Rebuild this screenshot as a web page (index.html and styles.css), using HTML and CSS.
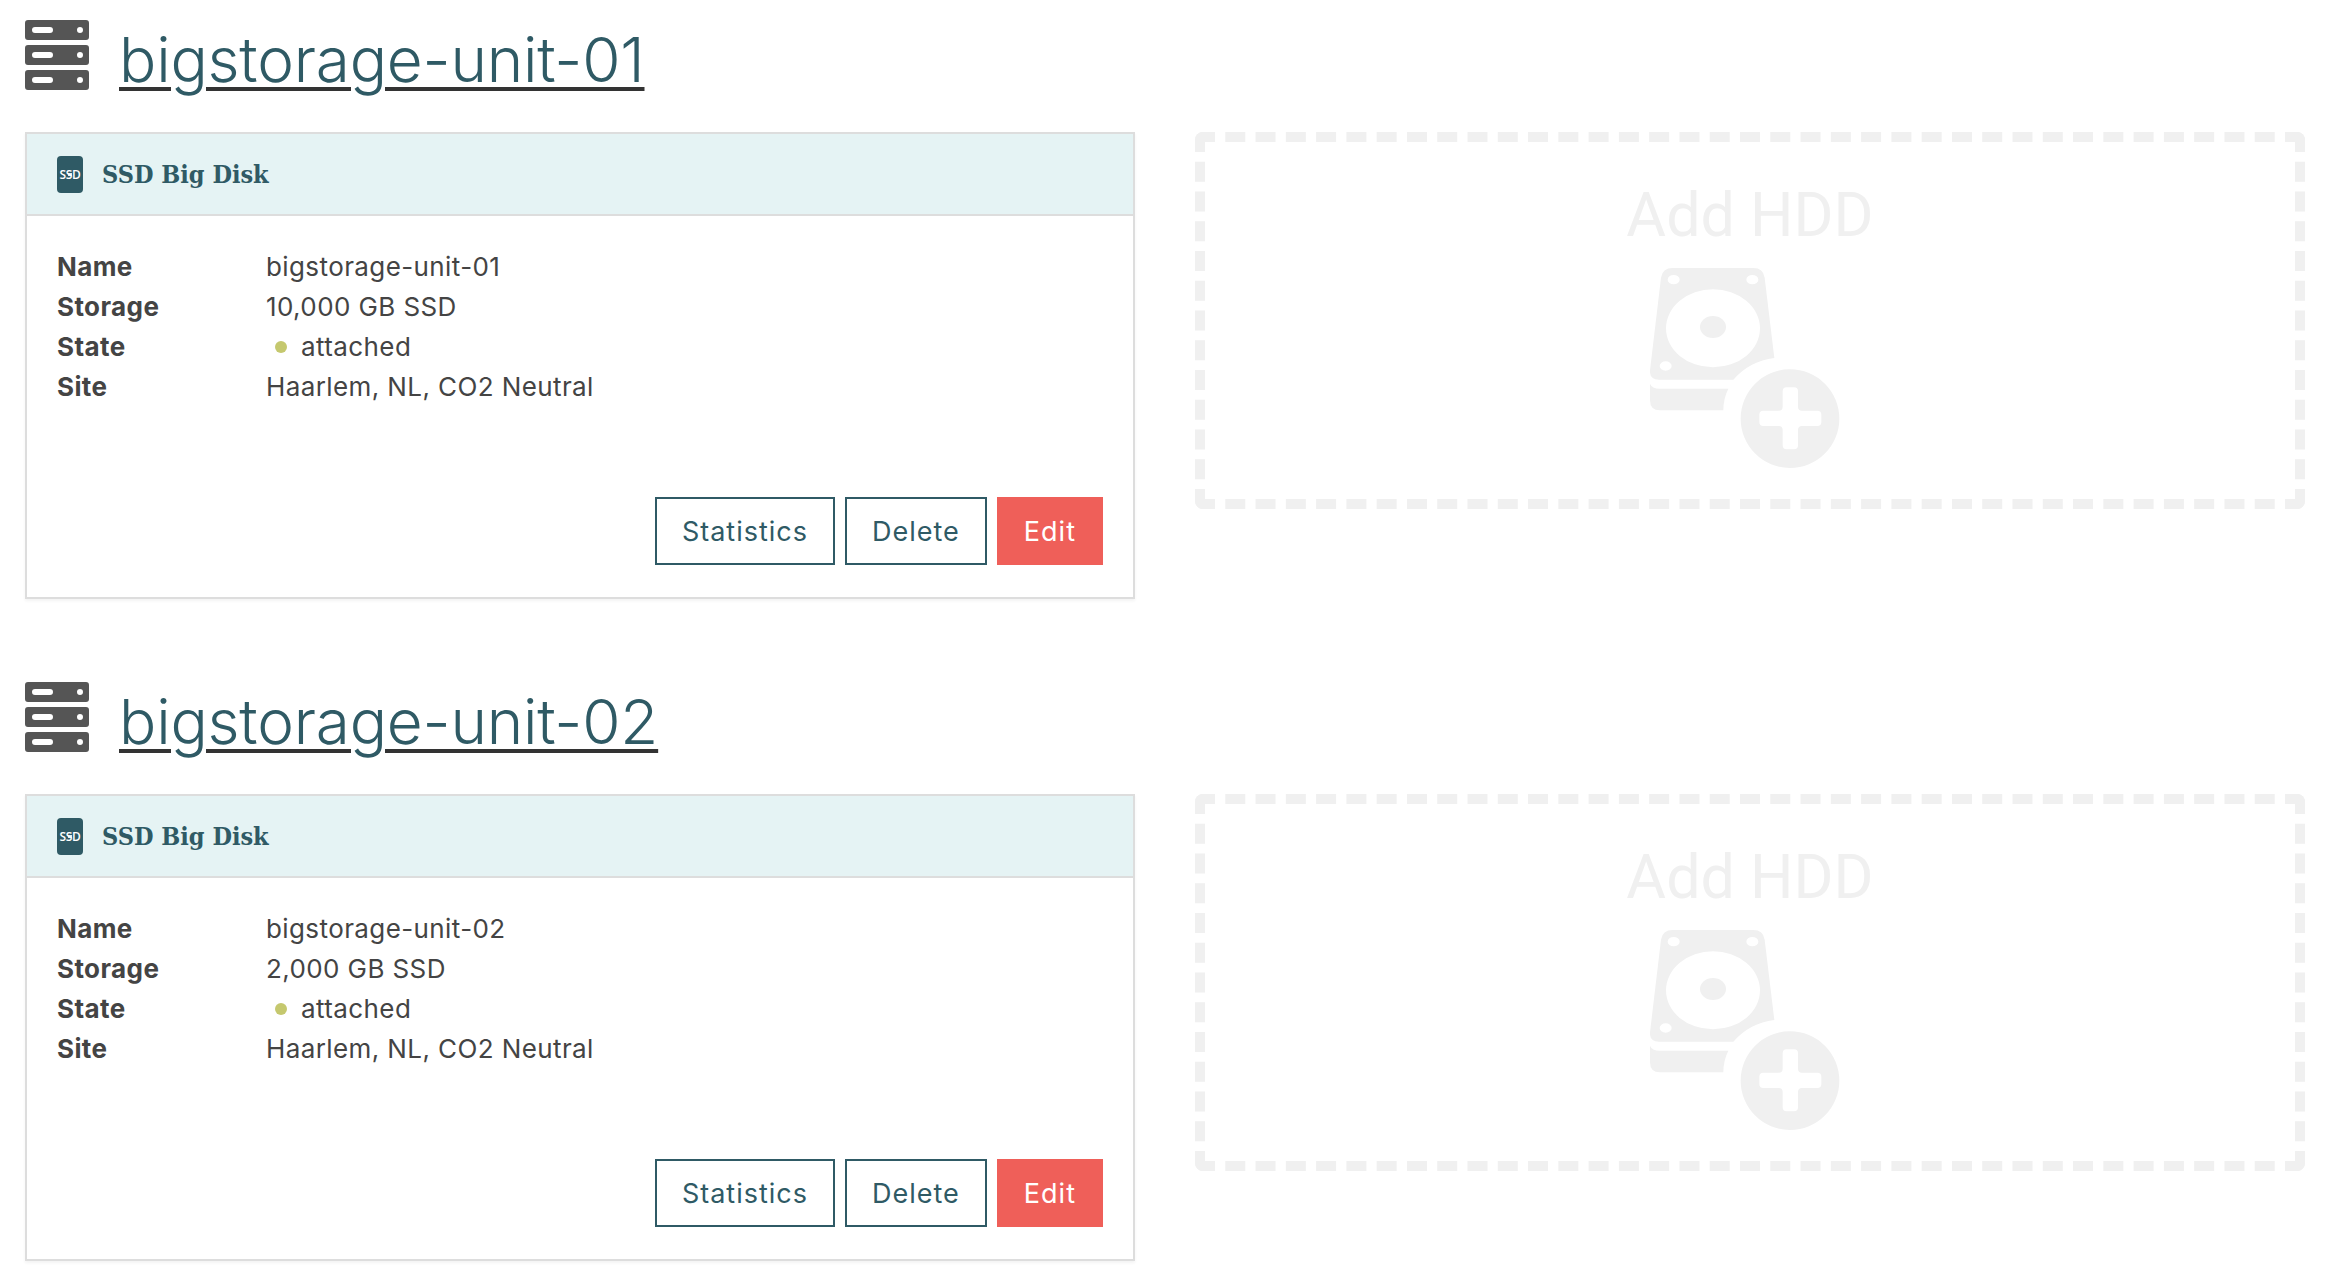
FILE: index.html
```html
<!DOCTYPE html>
<html lang="en">
<head>
    <meta charset="UTF-8">
    <title>Big Storage</title>
    <link rel="stylesheet" href="styles.css">
</head>
<body>
    <svg class="icon-defs" width="0" height="0">
        <symbol id="server" viewBox="0 0 64 70">
            <path fill="#555" fill-rule="evenodd" d="M3 0H61Q64 0 64 3V17Q64 20 61 20H3Q0 20 0 17V3Q0 0 3 0ZM10 7Q7 7 7 10T10 13H25Q28 13 28 10T25 7ZM55 7A3 3 0 0 0 55 13A3 3 0 0 0 55 7Z"/>
            <path fill="#555" fill-rule="evenodd" d="M3 25H61Q64 25 64 28V42Q64 45 61 45H3Q0 45 0 42V28Q0 25 3 25ZM10 32Q7 32 7 35T10 38H25Q28 38 28 35T25 32ZM55 32A3 3 0 0 0 55 38A3 3 0 0 0 55 32Z"/>
            <path fill="#555" fill-rule="evenodd" d="M3 50H61Q64 50 64 53V67Q64 70 61 70H3Q0 70 0 67V53Q0 50 3 50ZM10 57Q7 57 7 60T10 63H25Q28 63 28 60T25 57ZM55 57A3 3 0 0 0 55 63A3 3 0 0 0 55 57Z"/>
        </symbol>
        <symbol id="hdd-add" viewBox="270 323 570 600">
            <path fill="#f0f0f0" fill-rule="evenodd" d="M338 323H580Q610 323 614 352L643 593A195 195 0 0 0 520 658H297Q268 658 270 630L303 352Q307 323 338 323ZM341 344A18 14 0 0 0 341 372A18 14 0 0 0 341 344ZM577 344A18 14 0 0 0 577 372A18 14 0 0 0 577 344ZM317 603A18 14 0 0 0 317 631A18 14 0 0 0 317 603ZM459 387A141 117 0 0 0 459 621A141 117 0 0 0 459 387Z"/>
            <ellipse fill="#f0f0f0" cx="459" cy="500" rx="39" ry="33"/>
            <path fill="#f0f0f0" d="M270 670Q275 685 300 685H505Q490 715 490 750H300Q270 750 270 720Z"/>
            <path fill="#f0f0f0" fill-rule="evenodd" d="M690 627A148 148 0 1 0 690 923A148 148 0 1 0 690 627ZM680 681H702Q714 681 714 693V739Q714 751 726 751H772Q784 751 784 763V785Q784 797 772 797H726Q714 797 714 809V855Q714 867 702 867H680Q668 867 668 855V809Q668 797 656 797H610Q598 797 598 785V763Q598 751 610 751H656Q668 751 668 739V693Q668 681 680 681Z"/>
        </symbol>
    </svg>

    <section class="unit">
        <div class="unit-title">
            <svg class="server-icon"><use href="#server"/></svg>
            <h1><a href="#">bigstorage-unit-01</a></h1>
        </div>
        <div class="unit-grid">
            <div class="disk-card">
                <div class="disk-head">
                    <div class="ssd-icon">SSD</div>
                    <h3>SSD Big Disk</h3>
                </div>
                <div class="disk-body">
                    <div class="disk-row"><b>Name</b><span>bigstorage-unit-01</span></div>
                    <div class="disk-row"><b>Storage</b><span>10,000 GB SSD</span></div>
                    <div class="disk-row"><b>State</b><span class="state"><i class="dot"></i>attached</span></div>
                    <div class="disk-row"><b>Site</b><span>Haarlem, NL, CO2 Neutral</span></div>
                    <div class="disk-actions">
                        <a class="btn" href="#">Statistics</a>
                        <a class="btn" href="#">Delete</a>
                        <a class="btn btn-edit" href="#">Edit</a>
                    </div>
                </div>
            </div>
            <div class="add-box">
                <div class="add-label">Add HDD</div>
                <svg class="add-icon"><use href="#hdd-add"/></svg>
            </div>
        </div>
    </section>

    <section class="unit">
        <div class="unit-title">
            <svg class="server-icon"><use href="#server"/></svg>
            <h1><a href="#">bigstorage-unit-02</a></h1>
        </div>
        <div class="unit-grid">
            <div class="disk-card">
                <div class="disk-head">
                    <div class="ssd-icon">SSD</div>
                    <h3>SSD Big Disk</h3>
                </div>
                <div class="disk-body">
                    <div class="disk-row"><b>Name</b><span>bigstorage-unit-02</span></div>
                    <div class="disk-row"><b>Storage</b><span>2,000 GB SSD</span></div>
                    <div class="disk-row"><b>State</b><span class="state"><i class="dot"></i>attached</span></div>
                    <div class="disk-row"><b>Site</b><span>Haarlem, NL, CO2 Neutral</span></div>
                    <div class="disk-actions">
                        <a class="btn" href="#">Statistics</a>
                        <a class="btn" href="#">Delete</a>
                        <a class="btn btn-edit" href="#">Edit</a>
                    </div>
                </div>
            </div>
            <div class="add-box">
                <div class="add-label">Add HDD</div>
                <svg class="add-icon"><use href="#hdd-add"/></svg>
            </div>
        </div>
    </section>
</body>
</html>
```

FILE: styles.css
```css
body {
    margin: 0;
    padding: 0 41px 0 25px;
    background-color: #fff;
    font-family: Inter, "Liberation Sans", sans-serif;
    color: #444;
}
.icon-defs {
    display: block;
    height: 0;
}
.unit {
    margin-bottom: 63px;
}
.unit-title {
    display: flex;
    align-items: flex-start;
    gap: 30px;
    height: 132px;
    padding-top: 20px;
    box-sizing: border-box;
}
.server-icon {
    width: 64px;
    height: 70px;
    flex: none;
}
h1 {
    margin: 4px 0 0;
    font-size: 62px;
    font-weight: 300;
    line-height: 72px;
    letter-spacing: -0.2px;
}
h1 a {
    color: #2f5a65;
    text-decoration: underline;
    text-decoration-color: #333;
    text-decoration-thickness: 4px;
    text-underline-offset: 5px;
}
.unit-grid {
    display: grid;
    grid-template-columns: 1110px 1110px;
    gap: 60px;
    align-items: start;
}
.disk-card {
    height: 467px;
    box-sizing: border-box;
    display: flex;
    flex-direction: column;
    border: 2px solid #ddd;
    box-shadow: 0 2px 3px rgba(0,0,0,0.05);
}
.disk-head {
    display: flex;
    align-items: center;
    gap: 19px;
    height: 80px;
    flex: none;
    padding-left: 30px;
    background-color: #e5f3f4;
    border-bottom: 2px solid #ddd;
}
.disk-head h3 {
    margin: 0;
    font-family: "DejaVu Serif Condensed", "DejaVu Serif", serif;
    font-size: 25px;
    font-weight: bold;
    color: #2f5a65;
}
.ssd-icon {
    width: 26px;
    height: 37px;
    border-radius: 4px;
    background-color: #2f5a65;
    background-image: radial-gradient(circle 2px, #dfeef0 90%, transparent 100%);
    background-size: 18px 29px;
    background-position: 4px 4px;
    color: #fff;
    font-family: "Open Sans", sans-serif;
    font-size: 12px;
    font-weight: 600;
    line-height: 37px;
    letter-spacing: -0.4px;
    text-align: center;
}
.disk-body {
    flex: 1;
    display: flex;
    flex-direction: column;
    padding: 31px 30px 32px;
}
.disk-row {
    display: flex;
    font-size: 26px;
    line-height: 40px;
    letter-spacing: 0.4px;
}
.disk-row b {
    width: 209px;
    font-weight: 700;
}
.state {
    display: flex;
    align-items: center;
}
.dot {
    width: 12px;
    height: 12px;
    margin: 0 14px 0 9px;
    border-radius: 50%;
    background-color: #c5c86e;
}
.disk-actions {
    display: flex;
    justify-content: flex-end;
    gap: 10px;
    margin-top: auto;
}
.btn {
    display: block;
    padding: 0 25px;
    height: 68px;
    box-sizing: border-box;
    border: 2px solid #2f5a65;
    color: #2f5a65;
    font-size: 27px;
    line-height: 65px;
    letter-spacing: 1px;
    text-decoration: none;
}
.btn-edit {
    background-color: #ef5f59;
    border-color: #ef5f59;
    color: #fff;
}
.add-box {
    height: 377px;
    box-sizing: border-box;
    display: flex;
    flex-direction: column;
    align-items: center;
    border: 10px dashed #f0f0f0;
    border-radius: 8px;
}
.add-label {
    margin-top: 38px;
    font-family: Roboto, sans-serif;
    font-size: 61px;
    font-weight: 400;
    line-height: 70px;
    color: #f0f0f0;
}
.add-icon {
    width: 190px;
    height: 200px;
    margin: 18px 0 0 -10px;
}
```
